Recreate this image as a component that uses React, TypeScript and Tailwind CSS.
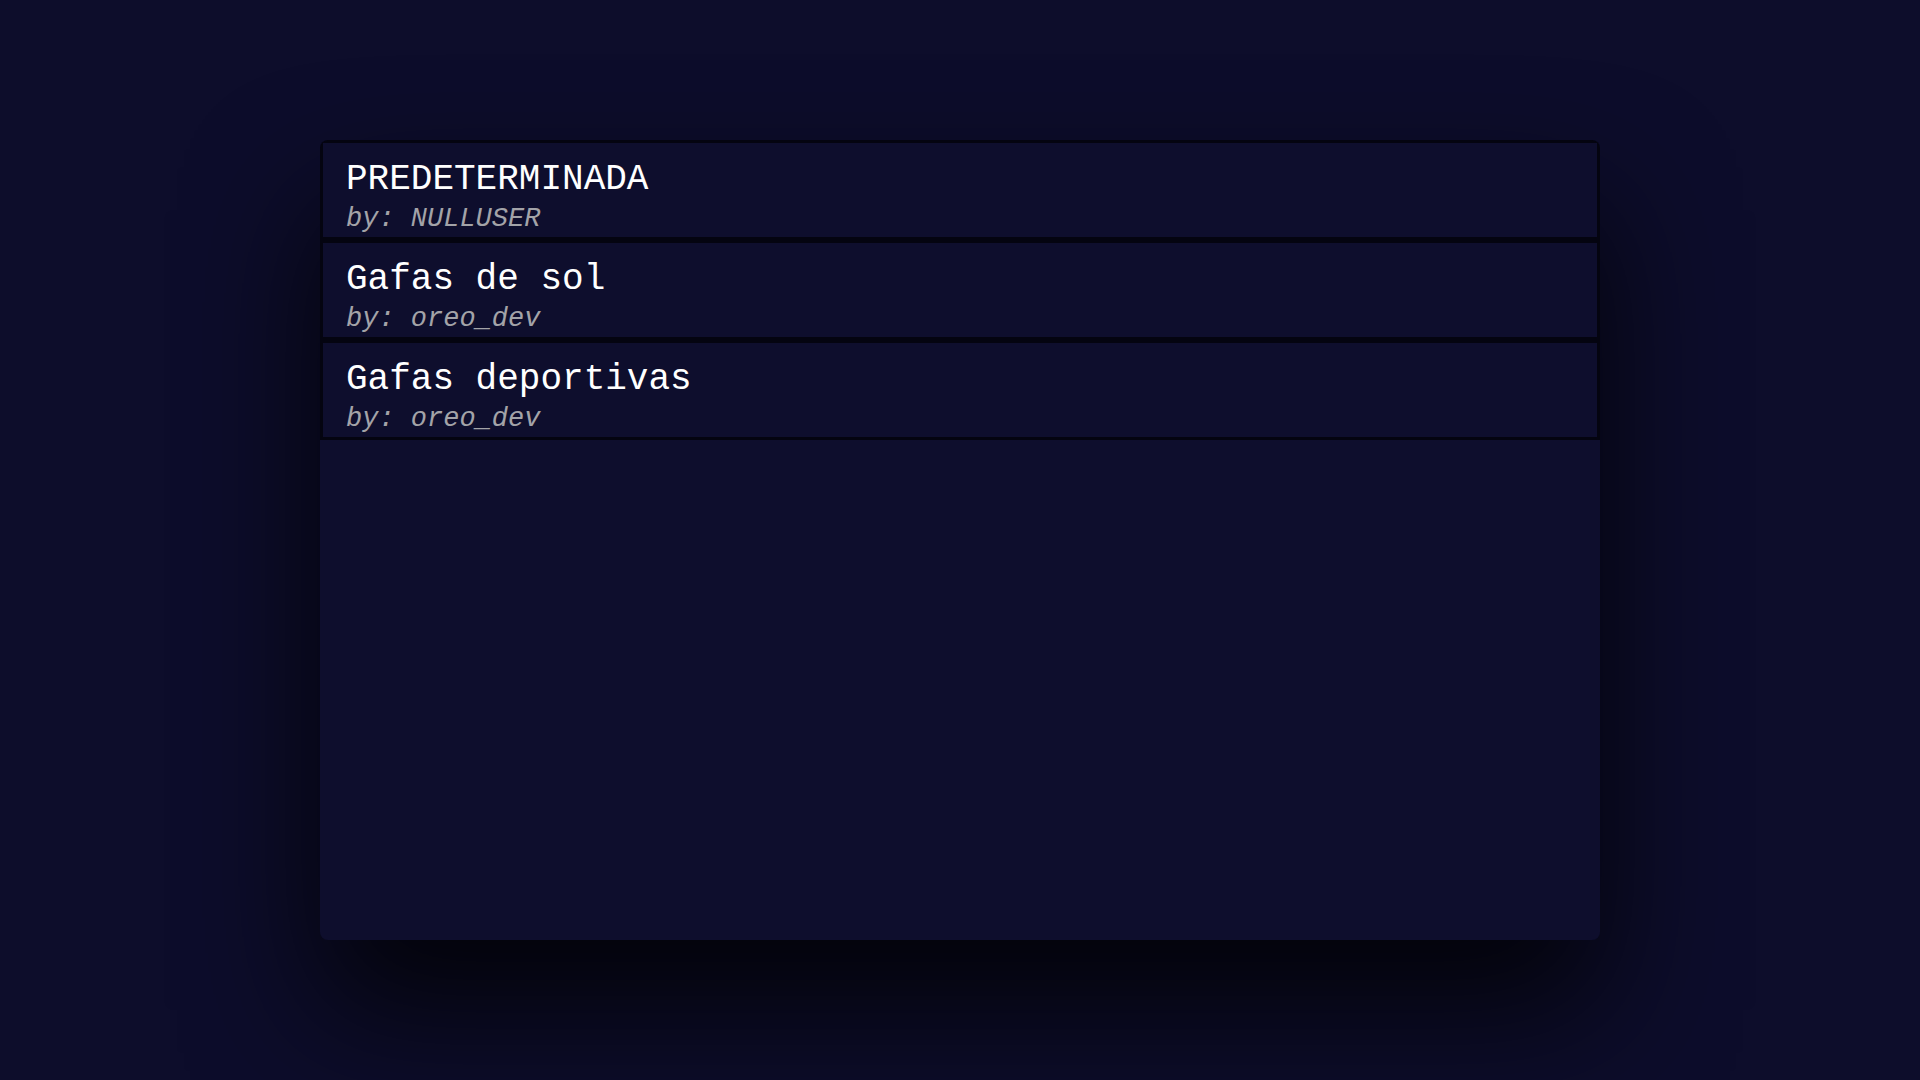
const items = [
    { name: "PREDETERMINADA", author: "NULLUSER" },
    { name: "Gafas de sol", author: "oreo_dev" },
    { name: "Gafas deportivas", author: "oreo_dev" },
];

const App = () => {
    return (
        <div className="w-full h-[1080px] bg-[#0d0d2b] flex justify-center pt-[140px] overflow-hidden" style={{ fontFamily: '"Liberation Mono", "DejaVu Sans Mono", monospace' }}>
            <div className="w-[1280px] h-[800px] bg-[#0e0e2d] rounded-lg overflow-hidden flex flex-col shadow-[0_70px_130px_rgba(0,0,0,0.8)]">
                {items.map((item) => (
                    <div key={item.name} className="h-[100px] border-[3px] border-[#040410] pl-[23px] pt-[19px] flex flex-col">
                        <span className="text-[36px] leading-none text-white">{item.name}</span>
                        <span className="text-[27px] leading-none italic text-[#a3a3a8] mt-2">by: {item.author}</span>
                    </div>
                ))}
            </div>
        </div>
    );
};

export default App;
